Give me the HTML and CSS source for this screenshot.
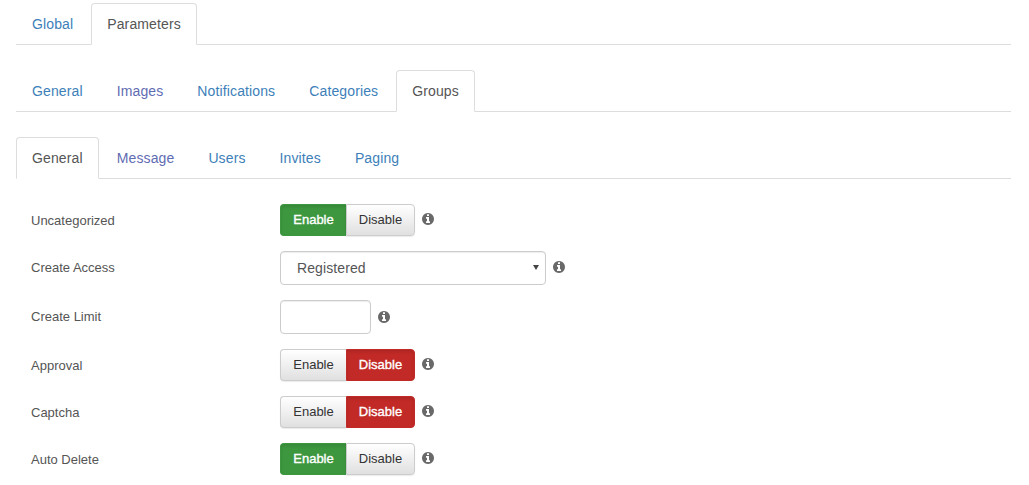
FILE: index.html
```html
<!DOCTYPE html>
<html lang="en">
<head>
<meta charset="utf-8">
<title>Parameters</title>
<link rel="stylesheet" href="styles.css">
</head>
<body>
<svg class="sprite" xmlns="http://www.w3.org/2000/svg"><symbol id="info" viewBox="0 128 1536 1536"><path d="M1024 1376v-160q0-14-9-23t-23-9h-96v-512q0-14-9-23t-23-9h-320q-14 0-23 9t-9 23v160q0 14 9 23t23 9h96v320h-96q-14 0-23 9t-9 23v160q0 14 9 23t23 9h448q14 0 23-9t9-23zm-128-896v-160q0-14-9-23t-23-9h-192q-14 0-23 9t-9 23v160q0 14 9 23t23 9h192q14 0 23-9t9-23zm640 416q0 209-103 385.5t-279.5 279.5-385.5 103-385.5-103-279.5-279.5-103-385.5 103-385.5 279.5-279.5 385.5-103 385.5 103 279.5 279.5 103 385.5z"/></symbol></svg>
<main class="page">
  <ul class="tabs">
    <li><a class="tab" href="#">Global</a></li>
    <li><a class="tab active" href="#">Parameters</a></li>
  </ul>
  <ul class="tabs">
    <li><a class="tab" href="#">General</a></li>
    <li><a class="tab visited" href="#">Images</a></li>
    <li><a class="tab" href="#">Notifications</a></li>
    <li><a class="tab" href="#">Categories</a></li>
    <li><a class="tab active" href="#">Groups</a></li>
  </ul>
  <ul class="tabs">
    <li><a class="tab active" href="#">General</a></li>
    <li><a class="tab visited" href="#">Message</a></li>
    <li><a class="tab" href="#">Users</a></li>
    <li><a class="tab" href="#">Invites</a></li>
    <li><a class="tab" href="#">Paging</a></li>
  </ul>
  <form class="form">
    <div class="row row-toggle">
      <label class="label">Uncategorized</label>
      <div class="toggle"><button type="button" class="btn first on-green">Enable</button><button type="button" class="btn last">Disable</button></div>
      <svg class="info info-up"><use href="#info"/></svg>
    </div>
    <div class="row">
      <label class="label">Create Access</label>
      <div class="select-wrap"><select class="select"><option>Registered</option></select></div>
      <svg class="info info-up"><use href="#info"/></svg>
    </div>
    <div class="row">
      <label class="label">Create Limit</label>
      <input class="input" type="text">
      <svg class="info"><use href="#info"/></svg>
    </div>
    <div class="row row-toggle">
      <label class="label">Approval</label>
      <div class="toggle"><button type="button" class="btn first">Enable</button><button type="button" class="btn last on-red">Disable</button></div>
      <svg class="info info-up"><use href="#info"/></svg>
    </div>
    <div class="row row-toggle">
      <label class="label">Captcha</label>
      <div class="toggle"><button type="button" class="btn first">Enable</button><button type="button" class="btn last on-red">Disable</button></div>
      <svg class="info info-up"><use href="#info"/></svg>
    </div>
    <div class="row row-toggle">
      <label class="label">Auto Delete</label>
      <div class="toggle"><button type="button" class="btn first on-green">Enable</button><button type="button" class="btn last">Disable</button></div>
      <svg class="info info-up"><use href="#info"/></svg>
    </div>
  </form>
</main>
</body>
</html>
```
FILE: styles.css
```css
* { box-sizing: border-box; }
html, body { margin: 0; padding: 0; background: #fff; }
body {
  font-family: "Liberation Sans", Arial, sans-serif;
  font-size: 14px;
  line-height: 20px;
  color: #555;
  overflow: hidden;
}
.sprite { display: none; }
.page { padding: 3px 18px 0 16px; }
.tabs {
  display: flex;
  list-style: none;
  margin: 0 0 25px;
  padding: 0;
  border-bottom: 1px solid #ddd;
}
.tabs li { margin-bottom: -1px; margin-right: 2px; }
.tab {
  display: block;
  padding: 10px 15px;
  border: 1px solid transparent;
  border-radius: 4px 4px 0 0;
  color: #3d7fb9;
  letter-spacing: .125px;
  text-decoration: none;
}
.tab.visited { color: #5f6cb3; }
.tab.active {
  color: #555;
  background: #fff;
  border-color: #ddd #ddd #fff;
}
.row {
  display: flex;
  align-items: center;
  margin-bottom: 15px;
}
.label {
  width: 264px;
  padding-left: 15px;
  font-size: 13px;
  color: #555;
}
.row-toggle .label { padding-top: 2px; }
.toggle { display: flex; }
.btn {
  height: 32px;
  padding: 0 0 1px;
  font-family: inherit;
  font-size: 13px;
  line-height: 18px;
  color: #333;
  background: linear-gradient(#fff, #e0e0e0);
  border: 1px solid #ccc;
  box-shadow: 0 1px 1px rgba(0, 0, 0, .08);
}
.btn.first { width: 66px; border-radius: 4px 0 0 4px; border-right: 0; }
.btn.last { width: 69px; border-radius: 0 4px 4px 0; }
.btn.on-green {
  color: #fff;
  -webkit-text-stroke: .35px #fff;
  background: #3d973f;
  border-color: #3d973f;
  box-shadow: inset 0 2px 3px rgba(0, 0, 0, .1);
}
.btn.on-red {
  color: #fff;
  -webkit-text-stroke: .35px #fff;
  background: #c12a27;
  border-color: #c12a27;
  box-shadow: inset 0 2px 3px rgba(0, 0, 0, .1);
}
.select-wrap { position: relative; display: flex; }
.select-wrap::after {
  content: "";
  position: absolute;
  top: 14px;
  right: 7px;
  border-style: solid;
  border-width: 5px 3px 0;
  border-color: #444 transparent transparent;
  pointer-events: none;
}
.select {
  appearance: none;
  width: 266px;
  height: 34px;
  padding: 6px 16px;
  font-family: inherit;
  font-size: 14px;
  letter-spacing: .1px;
  color: #555;
  background: #fff;
  border: 1px solid #ccc;
  border-radius: 4px;
  box-shadow: inset 0 1px 1px rgba(0, 0, 0, .075);
}
.input {
  width: 91px;
  height: 34px;
  padding: 6px 12px;
  font-family: inherit;
  font-size: 14px;
  background: #fff;
  border: 1px solid #ccc;
  border-radius: 4px;
  box-shadow: inset 0 1px 1px rgba(0, 0, 0, .075);
}
.info {
  width: 12px;
  height: 12px;
  margin-left: 7px;
  fill: #696969;
}
.info-up { margin-top: -2px; }
```
